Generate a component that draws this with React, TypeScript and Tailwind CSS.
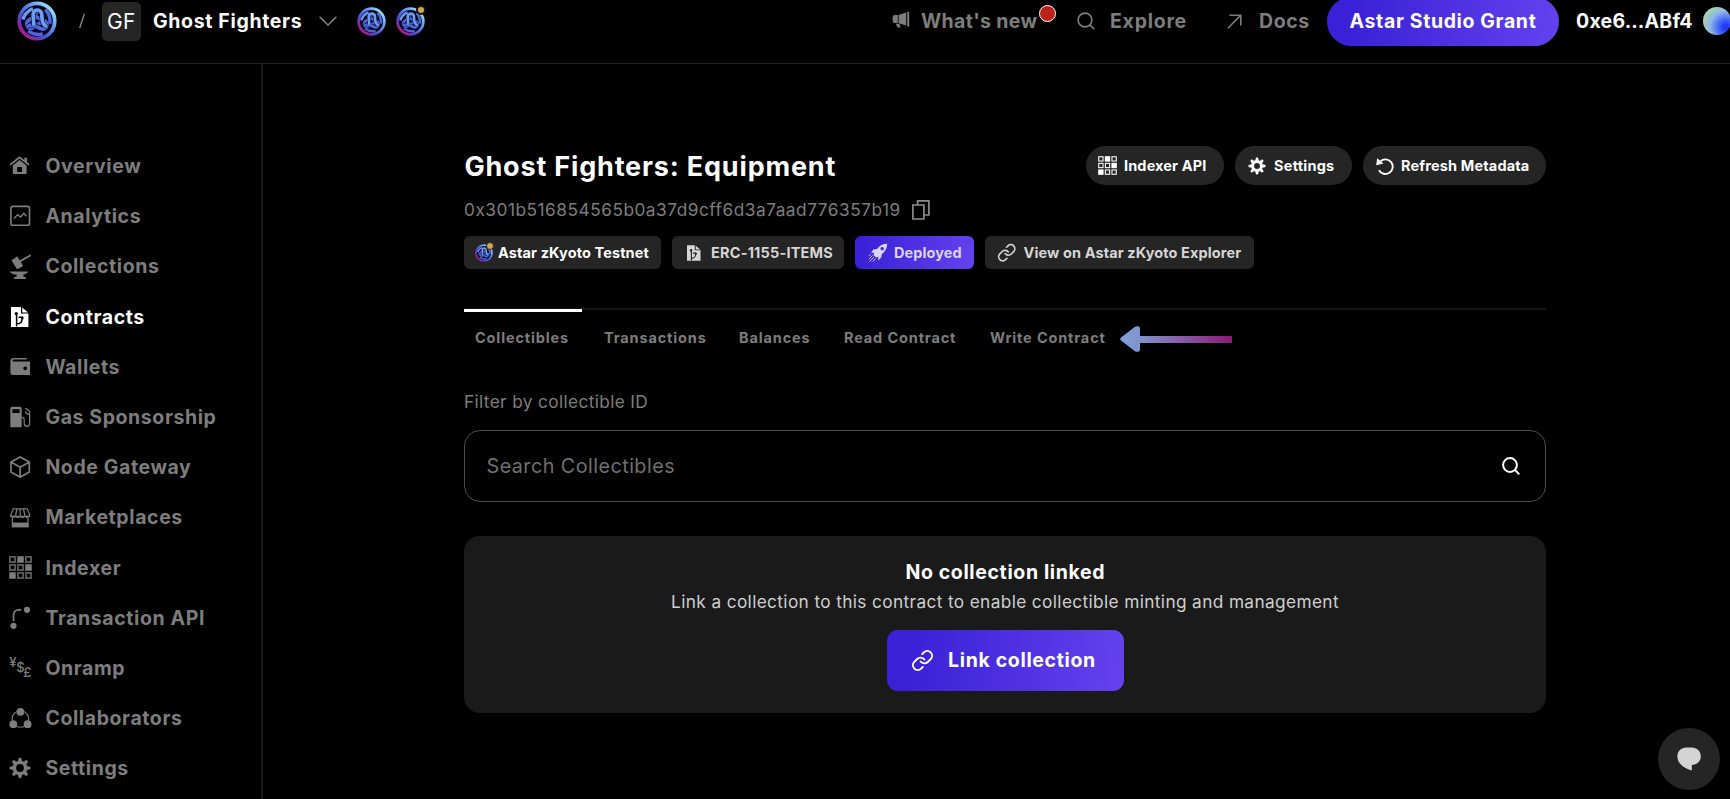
import type { ReactNode } from "react";
import { Link } from "lucide-react";

function AstarLogo({ id, className }: { id: string; className: string }) {
  const loop = "M16.6 24.4 V13.4 A4.3 4.3 0 0 1 25.2 13.4 V19 C25.2 22 26.6 24.6 29.4 26.4";
  const shades = ["#6f9bf0", "#4b6ae0", "#4f62d8"];
  return (
    <svg viewBox="0 0 40 40" className={className} fill="none">
      <defs>
        <linearGradient id={id} gradientUnits="userSpaceOnUse" x1="34" y1="5" x2="6" y2="34">
          <stop offset="0" stopColor="#9be4fb" />
          <stop offset="0.28" stopColor="#6d9ff2" />
          <stop offset="0.6" stopColor="#4a5ddb" />
          <stop offset="0.82" stopColor="#6a35b5" />
          <stop offset="1" stopColor="#c01584" />
        </linearGradient>
      </defs>
      <circle cx="20" cy="20" r="19" fill="#05061a" />
      {[240, 120, 0].map((a, i) => (
        <g key={a} transform={`rotate(${a - 4} 20 20)`}>
          <path d={loop} stroke="#080a28" strokeWidth="4.8" />
          <path d={loop} stroke={shades[2 - i]} strokeWidth="3.7" />
          <path d="M6 17.5 C8 12.4 11.6 9 16.8 7.2" stroke={shades[2 - i]} strokeWidth="3.4" />
        </g>
      ))}
      <circle cx="20" cy="20" r="17.7" stroke={`url(#${id})`} strokeWidth="3.8" />
    </svg>
  );
}

function TestnetLogo({ id, size, dot }: { id: string; size: string; dot: string }) {
  return (
    <span className="relative flex">
      <AstarLogo id={id} className={size} />
      <span className={`absolute rounded-full bg-[#d5a94f] ${dot}`} />
    </span>
  );
}

function Gear({ className, hole = 5.6, ring = 3.4 }: { className: string; hole?: number; ring?: number }) {
  return (
    <svg viewBox="0 0 22 22" className={className} fill="none" stroke="currentColor">
      <circle cx="11" cy="11" r={hole} strokeWidth={ring} />
      {[0, 45, 90, 135, 180, 225, 270, 315].map((a) => (
        <path key={a} d="M9.1 4.6 L9.9 0.9 H12.1 L12.9 4.6z" fill="currentColor" strokeWidth="0.4" transform={`rotate(${a} 11 11)`} />
      ))}
    </svg>
  );
}

function GridIcon({ className }: { className: string }) {
  const on = ["1-0", "2-1", "0-2"];
  return (
    <svg viewBox="0 0 23 23" className={className} fill="none" stroke="currentColor">
      {[0, 1, 2].flatMap((r) =>
        [0, 1, 2].map((c) => (
          <rect
            key={`${c}-${r}`}
            x={0.9 + c * 8}
            y={0.9 + r * 8}
            width="5.2"
            height="5.2"
            strokeWidth="1.3"
            fill={on.includes(`${c}-${r}`) ? "currentColor" : "none"}
          />
        )),
      )}
    </svg>
  );
}

function ContractFile({ className, cut }: { className: string; cut: string }) {
  return (
    <svg viewBox="0 0 18 20" className={className} fill="currentColor">
      <path d="M0 0 H10 V6.6 H17.4 V20 H0z M11.2 0.6 L17 5.5 H11.2z" />
      <g className={cut} fill="none" strokeWidth="1.5">
        <path d="M5.6 6.5 V19.5 M5.6 17 C10 16.6 11.2 15 11.2 10.5 M7.6 10.2 H12" />
        <circle cx="5.2" cy="6.6" r="0.9" />
        <circle cx="11.3" cy="11" r="0.7" />
      </g>
    </svg>
  );
}

function SearchGlyph({ className, w }: { className: string; w: number }) {
  return (
    <svg viewBox="0 0 18 18" className={className} fill="none" stroke="currentColor" strokeWidth={w}>
      <circle cx="8" cy="8" r="6.9" />
      <path d="M12.9 12.9 L17.2 17.2" />
    </svg>
  );
}

const S = "h-[22px] w-[22px]";

const nav: { label: string; icon: ReactNode; active?: boolean }[] = [
  {
    label: "Overview",
    icon: (
      <svg viewBox="0 0 22 22" className={S} fill="none" stroke="currentColor">
        <path d="M1.2 9.8 L10.5 2.4 L20 9.8" strokeWidth="1.8" />
        <path d="M15.3 2.8 H18 V7.6 L15.3 5.4z" fill="currentColor" stroke="none" />
        <path d="M3.8 10.4 L10.5 5 L17.6 10.4 V18 Q17.6 19 16.6 19 H4.8 Q3.8 19 3.8 18z M8.2 12 V17 H13 V12z" fill="currentColor" fillRule="evenodd" stroke="none" />
      </svg>
    ),
  },
  {
    label: "Analytics",
    icon: (
      <svg viewBox="0 0 22 22" className={S} fill="none" stroke="currentColor">
        <rect x="1.9" y="1.4" width="18.6" height="18.8" rx="2" strokeWidth="1.6" />
        <path d="M5 13.4 L8.6 9.6 L11.6 12 L14.8 8.4 L17.4 11.2" strokeWidth="1.4" />
      </svg>
    ),
  },
  {
    label: "Collections",
    icon: (
      <svg viewBox="0 0 22 26" className="h-[26px] w-[22px]" fill="currentColor">
        <path d="M2.3 6 L4 5.6 L8.2 2.3 L14 11.6 L12.8 13 L8 15.3z" />
        <path d="M10.5 7.6 L21.8 1.2" stroke="currentColor" strokeWidth="1.8" />
        <path d="M0.8 17.4 H19 L18 19.3 L14.4 20.6 V22.4 L17 23.6 V25 H4.8 V23.6 L7.6 22.4 V20.6 C4 20.4 1.8 19.4 0.8 17.4z" />
      </svg>
    ),
  },
  { label: "Contracts", active: true, icon: <ContractFile className="h-5 w-[18px]" cut="stroke-black" /> },
  {
    label: "Wallets",
    icon: (
      <svg viewBox="0 0 22 22" className={S} fill="currentColor">
        <path d="M4.2 1.9 H17.8 V3.4 H4.4 Q3.5 3.6 3.5 4.4 Q3.6 5.3 4.4 5.4 H21 V19 H3.6 Q1.4 19 1.4 16.6 V4.6 Q1.5 2.2 4.2 1.9z M16.2 10.4 a1.9 1.9 0 1 0 0.01 0z" fillRule="evenodd" />
      </svg>
    ),
  },
  {
    label: "Gas Sponsorship",
    icon: (
      <svg viewBox="0 0 22 22" className={S} fill="none" stroke="currentColor">
        <path d="M1.3 2.6 Q1.3 0.8 3.2 0.8 H10.9 Q12.7 0.8 12.7 2.6 V21.2 H1.3z M3.4 3.2 V7 H10.6 V3.2z" fill="currentColor" fillRule="evenodd" stroke="none" />
        <path d="M12.7 11.3 Q15.2 11.3 15.2 13.6 V17.6 Q15.4 20.3 18 20.3 Q20.6 20.2 20.6 17.4 V6.4 Q20.4 4 16.2 2.4 M16.6 5.2 Q16.4 8 20.4 8.4" strokeWidth="1.2" />
      </svg>
    ),
  },
  {
    label: "Node Gateway",
    icon: (
      <svg viewBox="0 0 22 22" className={S} fill="none" stroke="currentColor" strokeWidth="1.7" strokeLinejoin="round">
        <path d="M11.2 1 L20.3 6.1 V16.1 L11.2 21.2 L2 16.1 V6.1z M2 6.1 L11.2 11.3 L20.3 6.1 M11.2 11.3 V21.2" />
      </svg>
    ),
  },
  {
    label: "Marketplaces",
    icon: (
      <svg viewBox="0 0 22 22" className={S} fill="none" stroke="currentColor" strokeWidth="1.2">
        <path d="M4.2 1.8 H18.2 L20.6 7.6 V9.4 H1.8 V7.6z M8 1.8 L6.6 8 M11.2 1.8 V8 M14.4 1.8 L15.8 8" />
        <path d="M1.8 8.6 Q4.2 12.2 6.6 8.8 Q8.9 12.2 11.2 8.8 Q13.5 12.2 15.8 8.8 Q18.2 12.2 20.6 8.6" />
        <path d="M3.4 11 V19.6 H19 V11" />
        <path d="M3 15.6 H19.5 V20.2 H3z" fill="currentColor" stroke="none" />
      </svg>
    ),
  },
  { label: "Indexer", icon: <GridIcon className="h-[23px] w-[23px]" /> },
  {
    label: "Transaction API",
    icon: (
      <svg viewBox="0 0 22 24" className="h-6 w-[22px]" fill="currentColor">
        <circle cx="4.5" cy="19.8" r="3.1" />
        <circle cx="18" cy="3.8" r="3.1" />
        <path d="M4.5 15.2 V9.6 Q4.6 3.9 9.6 3.8 H12.2" fill="none" stroke="currentColor" strokeWidth="1.7" />
      </svg>
    ),
  },
  {
    label: "Onramp",
    icon: (
      <svg viewBox="0 0 22 22" className={`${S} overflow-visible font-['Inter'] text-[13px] font-medium tracking-normal`} fill="currentColor">
        <text x="0.2" y="10.4">¥</text>
        <text x="7.2" y="15.4">$</text>
        <text x="14.2" y="20.4">£</text>
      </svg>
    ),
  },
  {
    label: "Collaborators",
    icon: (
      <svg viewBox="0 0 23 22" className="h-[22px] w-[23px]" fill="currentColor">
        <circle cx="11.4" cy="12" r="8.3" fill="none" stroke="currentColor" strokeWidth="1.1" />
        <circle cx="11.4" cy="4.8" r="3.9" />
        <circle cx="4.3" cy="17.2" r="3.9" />
        <circle cx="18.6" cy="17.2" r="3.9" />
      </svg>
    ),
  },
  { label: "Settings", icon: <Gear className={S} /> },
];

const tabs = [
  { label: "Collectibles", pos: "w-[118px] pl-[11px]", active: true },
  { label: "Transactions", pos: "w-[136px] pl-[22px]" },
  { label: "Balances", pos: "w-[105px] pl-[21px]" },
  { label: "Read Contract", pos: "w-[146px] pl-[21px]" },
  { label: "Write Contract", pos: "w-[138px] pl-[21px]" },
];

export default function App() {
  return (
    <div className="flex h-[799px] w-[1730px] flex-col overflow-hidden bg-black font-['Inter',sans-serif] text-white">
      <header className="h-16 shrink-0 border-b border-[#232323]">
        <div className="flex h-[42px] items-center text-[19.5px] font-bold whitespace-nowrap">
          <AstarLogo id="astar-main" className="ml-[17px] h-10 w-10 shrink-0" />
          <svg viewBox="0 0 6 16" className="ml-[22px] h-4 w-[6px] shrink-0" stroke="#8a8a8a" strokeWidth="1.3">
            <path d="M0.7 15 L5.3 1" />
          </svg>
          <div className="ml-[17px] flex h-[39px] w-[39px] shrink-0 items-center justify-center rounded-[5px] bg-[#252525] pt-px text-[21px] font-normal tracking-[0.5px]">
            GF
          </div>
          <div className="ml-3 w-[166px] pt-[2px] tracking-[0.66px]">Ghost Fighters</div>
          <svg viewBox="0 0 18 10" className="h-[10px] w-[18px] shrink-0" fill="none" stroke="#8a8a8a" strokeWidth="1.4">
            <path d="M0.6 0.7 L9 8.9 L17.4 0.7" />
          </svg>
          <AstarLogo id="astar-one" className="ml-5 mr-[10px] h-[29px] w-[29px] shrink-0" />
          <TestnetLogo id="astar-two" size="h-[29px] w-[29px]" dot="-top-[2px] -right-[1px] h-[10px] w-[10px] border-2 border-[#17150f]" />

          <div className="ml-auto flex items-center text-[#7d7d7d]">
            <svg viewBox="0 0 18 18" className="mb-[2px] h-[18px] w-[18px]" fill="currentColor">
              <path d="M15.2 0.8 H17.2 V15.6 H15.2z M6.6 4 L14.2 1.4 V14.6 L6.6 12.2z M5.8 4 V12 H2 Q0.6 11.6 0.6 8 Q0.6 4.4 2 4z M3.8 12.8 H7.4 L8.6 16.6 H5.6z" />
            </svg>
            <div className="relative ml-[11px] w-[157px] pt-[2px] tracking-[0.36px]">
              What's new
              <span className="absolute top-0 left-[118px] h-[17px] w-[17px] rounded-full border border-white bg-[#bb2318]" />
            </div>
            <SearchGlyph className="-ml-px mr-px h-[18px] w-[18px]" w={1.6} />
            <div className="ml-[14px] w-[117px] pt-[2px] tracking-[0.74px]">Explore</div>
            <svg viewBox="0 0 15 15" className="h-[15px] w-[15px]" fill="none" stroke="currentColor" strokeWidth="1.6">
              <path d="M0.8 14.2 L13.8 1.2 M2.4 1.2 H13.8 V11.6" />
            </svg>
            <div className="ml-[17px] w-[68px] pt-[2px] tracking-[0.6px]">Docs</div>
          </div>
          <div className="flex h-[49px] w-[232px] items-center justify-center rounded-full bg-[linear-gradient(97deg,#3a20d6_10%,#6442ee)] pt-[2px] tracking-[0.63px]">
            Astar Studio Grant
          </div>
          <div className="ml-[17px] w-[127px] pt-[2px] tracking-[0.24px]">0xe6…ABf4</div>
          <div className="-mr-[1px] h-7 w-7 shrink-0 rounded-full bg-[radial-gradient(circle_at_82%_72%,#2238f5_8%,#4468f6_26%,#8fb6ea_52%,#a5d0b0_75%)]" />
        </div>
      </header>

      <div className="flex min-h-0 flex-1">
        <nav className="w-[263px] shrink-0 border-r-2 border-[#1a1a1a] pt-[76.6px]">
          {nav.map((n) => (
            <div
              key={n.label}
              className={`flex h-[50.2px] items-center text-[19.5px] font-bold tracking-[0.6px] ${n.active ? "text-white" : "text-[#7d7d7d]"}`}
            >
              <span className="ml-2 flex w-6 justify-center pt-px">{n.icon}</span>
              <span className="ml-[13.4px] pt-[2px] whitespace-nowrap">{n.label}</span>
            </div>
          ))}
        </nav>

        <main className="ml-[201px] flex w-[1082px] flex-col pt-[82px]">
          <div className="flex h-[39px] items-center gap-[11px] text-[14.5px] font-bold tracking-[0.13px]">
            <h1 className="mr-auto pt-[3px] pl-[0.4px] text-[27px] font-bold tracking-[0.82px]">Ghost Fighters: Equipment</h1>
            <button className="flex h-[39px] w-[138px] items-center rounded-full bg-[#252525] pl-3">
              <GridIcon className="mr-[7px] h-[19px] w-[19px]" />
              <span className="pt-px">Indexer API</span>
            </button>
            <button className="flex h-[39px] w-[117px] items-center rounded-full bg-[#252525] pl-[13px]">
              <Gear className="mr-2 h-[18px] w-[18px]" hole={5.4} ring={3.6} />
              <span className="pt-px tracking-[0.25px]">Settings</span>
            </button>
            <button className="flex h-[39px] w-[183px] items-center rounded-full bg-[#252525] pl-[13px]">
              <svg viewBox="0 0 18 18" className="mr-[7px] h-[18px] w-[18px]" fill="none" stroke="currentColor" strokeWidth="1.9">
                <path d="M4.4 4.4 A7.3 7.3 0 1 1 3 13.2" />
                <path d="M1.2 1.2 L7.4 6.6 L0.2 8.2z" fill="currentColor" stroke="none" />
              </svg>
              <span className="pt-px tracking-[0.16px]">Refresh Metadata</span>
            </button>
          </div>

          <div className="mt-[13px] flex h-6 items-center text-[17.25px] tracking-[0.52px] text-[#7d7d7d]">
            <span className="w-[448px] whitespace-nowrap">0x301b516854565b0a37d9cff6d3a7aad776357b19</span>
            <svg viewBox="0 0 18 20" className="h-5 w-[18px]" fill="none" stroke="#8c8c8c" strokeWidth="1.7">
              <path d="M0.9 5 H11.9 V19 H0.9z M5.6 5 V0.9 H16.9 V15 H11.9" />
            </svg>
          </div>

          <div className="mt-[14px] flex h-[33px] gap-[11px] text-[14.5px] font-bold whitespace-nowrap text-[#d6d6d6]">
            <span className="flex w-[197px] items-center rounded-md bg-[#252525] pl-[11px] tracking-[0.12px] text-white">
              <TestnetLogo id="astar-tag" size="h-[18px] w-[18px]" dot="-top-[2px] -right-[1px] h-[8px] w-[8px] border border-[#252525]" />
              <span className="ml-[5px]">Astar zKyoto Testnet</span>
            </span>
            <span className="flex w-[172px] items-center rounded-md bg-[#252525] pl-[15px] tracking-[0.2px]">
              <ContractFile className="mr-[10px] h-4 w-[14px]" cut="stroke-[#252525]" />
              <span>ERC-1155-ITEMS</span>
            </span>
            <span className="flex w-[119px] items-center rounded-md bg-[linear-gradient(97deg,#3a20d6_5%,#6442ee)] pl-[13px] tracking-[0.08px] text-[#dcd5fb]">
              <svg viewBox="0 0 20 20" className="mr-[6px] h-5 w-5" fill="currentColor">
                <path d="M19.2 0.8 C15 0.8 11.5 2.6 9 6 L5.4 6.6 L3 9.6 L6.2 9.8 L5.4 12 L8 14.6 L10.2 13.8 L10.4 17.4 L13.2 14.6 L13.8 11.2 C17.4 8.4 19.2 5 19.2 0.8z M14.2 3.9 a1.7 1.7 0 1 1 -0.01 0z" fillRule="evenodd" />
                <path d="M4.6 12.4 L1 16 M6 14 L1.6 18.6 M7.6 15.6 L4.8 18.6 M2.8 11.4 L0.8 12.8" stroke="currentColor" strokeWidth="0.9" />
              </svg>
              <span>Deployed</span>
            </span>
            <span className="flex w-[268.5px] items-center rounded-md bg-[#252525] pl-3 tracking-[0.11px]">
              <Link className="mr-[7px] h-[19.5px] w-[19.5px]" strokeWidth={2} />
              <span>View on Astar zKyoto Explorer</span>
            </span>
          </div>

          <div className="mt-[39px] flex h-[58px] border-t-2 border-[#151515] text-[14.5px] font-bold tracking-[0.86px] whitespace-nowrap text-[#7d7d7d]">
            {tabs.map((t) => (
              <div key={t.label} className={`-mt-px flex h-[57px] ${t.pos} ${t.active ? "border-t-3 border-white pt-[15px]" : "pt-[18px]"}`}>
                {t.label}
              </div>
            ))}
            <svg viewBox="0 0 112 26" className="mt-[16px] ml-[13px] h-[26px] w-28 shrink-0">
              <defs>
                <linearGradient id="pointer" gradientUnits="userSpaceOnUse" x1="0" y1="0" x2="112" y2="0">
                  <stop offset="0" stopColor="#7aa4d8" />
                  <stop offset="0.2" stopColor="#8290cb" />
                  <stop offset="1" stopColor="#8c1a76" />
                </linearGradient>
              </defs>
              <path d="M1 11.4 L15 0.8 Q17 -0.4 19 0.6 Q20 1.2 20 2.6 V10 H112 V17 H20 V23.4 Q20 24.8 19 25.4 Q17 26.4 15 25.2 L1 14.6 Q-0.6 13 1 11.4z" fill="url(#pointer)" />
            </svg>
          </div>

          <div className="mt-6 h-6 text-[17.25px] leading-6 tracking-[0.36px] text-[#7d7d7d]">Filter by collectible ID</div>
          <div className="mt-4 flex h-[72px] items-center justify-between rounded-2xl border border-[#4c4c4c] pr-[25px] pl-[21.5px] text-[19.75px] tracking-[0.46px] text-[#707070]">
            <span className="pt-px">Search Collectibles</span>
            <SearchGlyph className="h-[18px] w-[18px] text-white" w={2} />
          </div>

          <section className="mt-[34px] flex h-[177px] flex-col items-center rounded-2xl bg-[#1a1a1a] pt-6">
            <h2 className="pl-[0.6px] text-[19.5px] leading-6 font-bold tracking-[0.63px]">No collection linked</h2>
            <p className="mt-[6px] text-[17.25px] leading-6 tracking-[0.37px] text-[#cfcfcf]">
              Link a collection to this contract to enable collectible minting and management
            </p>
            <button className="mt-4 flex h-[61px] w-[237px] items-center rounded-[11px] bg-[linear-gradient(97deg,#3a20d6_10%,#6442ee)] pl-6 text-[19.5px] font-bold tracking-[0.66px]">
              <Link className="mr-[14.5px] h-[23px] w-[23px]" strokeWidth={2} />
              <span className="pt-px">Link collection</span>
            </button>
          </section>
        </main>
      </div>

      <button className="fixed right-[10px] bottom-[9px] flex h-[62px] w-[62px] items-center justify-center rounded-full bg-[#252525]">
        <svg viewBox="0 0 24 24" className="h-6 w-6" fill="#d4d4d4">
          <path d="M9.5 0.6 H14.5 C20 0.6 23.8 4.4 23.8 9.4 C23.8 14.4 20 17.8 14.8 17.9 V23.4 C9 21.8 0.4 17.6 0.4 9.4 C0.4 4.4 4.2 0.6 9.5 0.6z" />
        </svg>
      </button>
    </div>
  );
}
